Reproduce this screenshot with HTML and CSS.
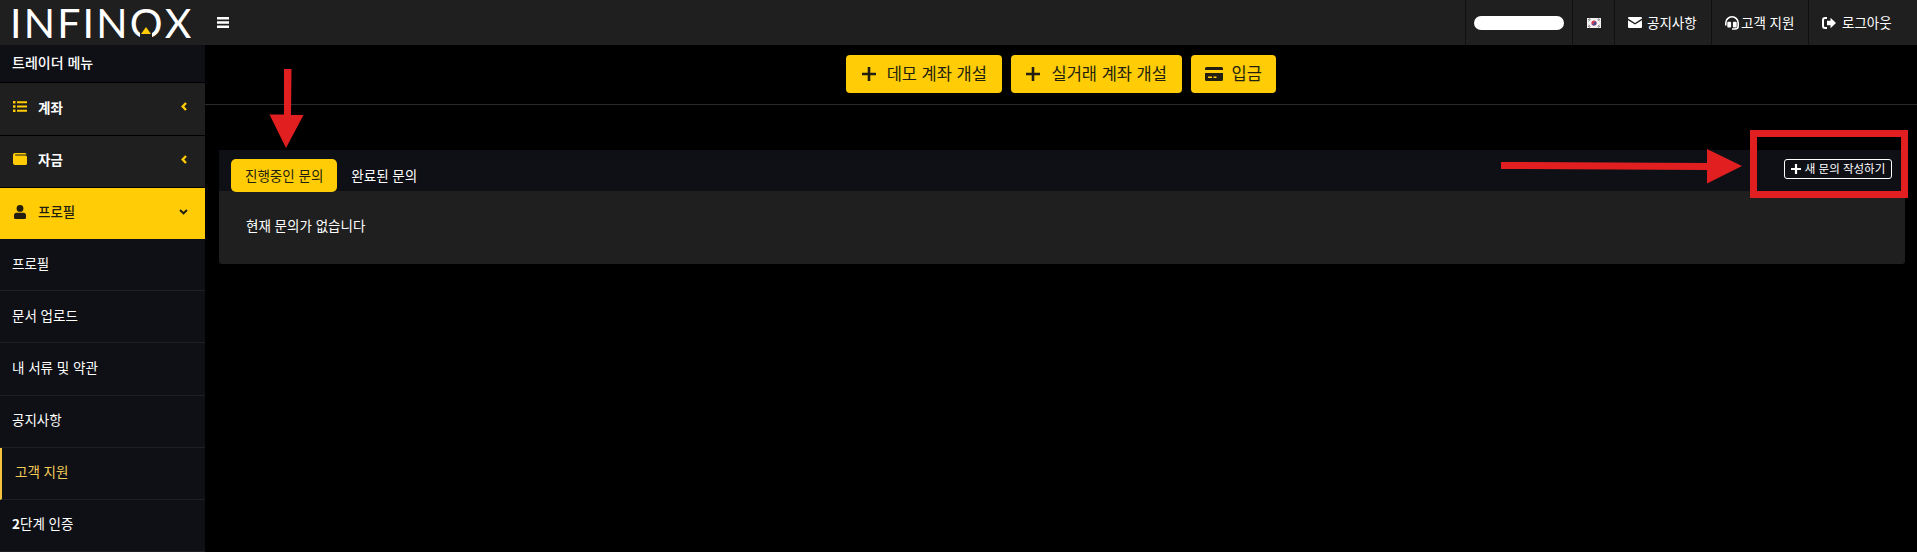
FILE: index.html
```html
<!DOCTYPE html>
<html lang="ko">
<head>
<meta charset="utf-8">
<title>고객 지원</title>
<link rel="stylesheet" href="styles.css">
</head>
<body>
<header class="topbar">
  <div class="logo">INFIN<span class="logo-o">O</span>X</div>
  <button class="burger" aria-label="메뉴"><svg width="12" height="11" viewBox="0 0 12 11"><path d="M0 0h12v2.400H0zM0 4.300h12v2.400H0zM0 8.600h12V11H0z" fill="#fff"/></svg></button>
  <nav class="topnav">
    <div class="topcell cell-user"><span class="pill"></span></div>
    <div class="topcell cell-flag">
      <svg width="14" height="10" viewBox="0 0 14 10"><rect width="14" height="10" fill="#f4f1f2"/><circle cx="7" cy="5" r="2.600" fill="#cf3f52"/><path d="M4.500 5a2.500 2.500 0 0 0 5 0 1.250 1.250 0 0 0-2.500 0 1.250 1.250 0 0 1-2.500 0z" fill="#3c4f96"/><path d="M1 2l2-1.500M1.500 3l2-1.500M10.500 1.500l2 1.500M11 .500l2 1.500M1 8l2 1.500M1.500 7l2 1.500M10.500 8.500l2-1.500M11 9.500l2-1.500" stroke="#555" stroke-width=".7"/></svg>
    </div>
    <a class="topcell cell-notice"><svg width="14" height="11" viewBox="0 0 14 11"><path d="M1 0h12a1 1 0 0 1 1 1v.6L7 6 0 1.600V1a1 1 0 0 1 1-1zM0 3.200 7 7.600l7-4.400V10a1 1 0 0 1-1 1H1a1 1 0 0 1-1-1z" fill="#fff"/></svg>공지사항</a>
    <a class="topcell cell-support"><svg width="14" height="14" viewBox="0 0 14 14"><path d="M7 .8A6.200 6.200 0 0 0 .8 7v2.500M7 .8A6.200 6.200 0 0 1 13.200 7v3c0 2-1.500 3-3.200 3H7" fill="none" stroke="#fff" stroke-width="1.600"/><rect x="2.300" y="5.800" width="3.800" height="5.800" rx="1" fill="#fff"/><rect x="7.900" y="5.800" width="3.800" height="5.800" rx="1" fill="#fff"/></svg>고객 지원</a>
    <a class="topcell cell-logout"><svg width="14" height="12" viewBox="0 0 14 12"><path d="M5 1H3a2 2 0 0 0-2 2v6a2 2 0 0 0 2 2h2" fill="none" stroke="#fff" stroke-width="2"/><path d="M5 3.800h3.500V.8L14 6l-5.500 5.200V8.200H5z" fill="#fff"/></svg>로그아웃</a>
  </nav>
</header>

<div class="layout">
  <aside class="sidebar">
    <div class="side-title">트레이더 메뉴</div>
    <a class="side-main">
      <svg class="side-icon" width="14" height="11" viewBox="0 0 14 11"><path d="M0 0h2.500v2.500H0zM4 .2h10v2.100H4zM0 4.250h2.500v2.500H0zM4 4.450h10v2.100H4zM0 8.500h2.500V11H0zM4 8.700h10v2.100H4z" fill="#ffcc05"/></svg>
      <span class="side-label">계좌</span>
      <svg class="side-chev" width="6" height="9" viewBox="0 0 6 9"><path d="M5 1 1.700 4.500 5 8" fill="none" stroke="#ffcc05" stroke-width="2.400"/></svg>
    </a>
    <a class="side-main">
      <svg class="side-icon" width="14" height="12" viewBox="0 0 14 12"><path d="M2 0h10a1.500 1.500 0 0 1 1.500 1.500H2.500a.5.5 0 0 0 0 1H12.500A1.500 1.500 0 0 1 14 4v6.500a1.500 1.500 0 0 1-1.500 1.500H2a2 2 0 0 1-2-2V2a2 2 0 0 1 2-2z" fill="#ffcc05"/></svg>
      <span class="side-label">자금</span>
      <svg class="side-chev" width="6" height="9" viewBox="0 0 6 9"><path d="M5 1 1.700 4.500 5 8" fill="none" stroke="#ffcc05" stroke-width="2.400"/></svg>
    </a>
    <a class="side-main side-open">
      <svg class="side-icon" width="14" height="14" viewBox="0 0 14 14"><circle cx="7" cy="3.400" r="3.400" fill="#231f10"/><path d="M3.500 7.800h7a2.500 2.500 0 0 1 2.500 2.500V12.700A1.300 1.300 0 0 1 11.700 14H2.300A1.300 1.300 0 0 1 1 12.700V10.300A2.500 2.500 0 0 1 3.500 7.800z" fill="#231f10"/></svg>
      <span class="side-label">프로필</span>
      <svg class="side-chev side-chev-down" width="9" height="6" viewBox="0 0 9 6"><path d="M1 1l3.500 3.300L8 1" fill="none" stroke="#231f10" stroke-width="2"/></svg>
    </a>
    <a class="side-sub">프로필</a>
    <a class="side-sub">문서 업로드</a>
    <a class="side-sub">내 서류 및 약관</a>
    <a class="side-sub">공지사항</a>
    <a class="side-sub side-active">고객 지원</a>
    <a class="side-sub"><b>2</b>단계 인증</a>
  </aside>

  <main class="content">
    <div class="actions">
      <button class="action"><svg width="14" height="14" viewBox="0 0 14 14"><path d="M5.700 0h2.600v5.700H14v2.600H8.300V14H5.700V8.300H0V5.700h5.700z" fill="#231f10"/></svg>데모 계좌 개설</button>
      <button class="action"><svg width="14" height="14" viewBox="0 0 14 14"><path d="M5.700 0h2.600v5.700H14v2.600H8.300V14H5.700V8.300H0V5.700h5.700z" fill="#231f10"/></svg>실거래 계좌 개설</button>
      <button class="action action-deposit"><svg width="18" height="14" viewBox="0 0 18 14"><path d="M1.500 0h15A1.500 1.500 0 0 1 18 1.500V3H0V1.500A1.500 1.500 0 0 1 1.500 0zM0 6h18v6.500a1.500 1.500 0 0 1-1.500 1.500h-15A1.500 1.500 0 0 1 0 12.500zM3 9.500v1.500h4V9.500zM8.500 9.500v1.500h3V9.500z" fill="#231f10" fill-rule="evenodd"/></svg>입금</button>
    </div>
    <section class="panel">
      <div class="panel-head">
        <a class="tab tab-active">진행중인 문의</a>
        <a class="tab">완료된 문의</a>
        <button class="new-btn"><svg width="10" height="10" viewBox="0 0 10 10"><path d="M3.900 0h2.200v3.900H10v2.200H6.100V10H3.900V6.100H0V3.900h3.900z" fill="#fff"/></svg>새 문의 작성하기</button>
      </div>
      <div class="panel-body">현재 문의가 없습니다</div>
    </section>
  </main>
</div>

<svg class="annotations" width="1917" height="552" viewBox="0 0 1917 552" aria-hidden="true">
  <path d="M284 69h7.500l-.5 46h12.500L286 148 269.500 114.500H284z" fill="#e21f20"/>
  <path d="M1501 162l206 1V149l35 17-35 17.500V170l-206-1z" fill="#e21f20"/>
  <rect x="1753.500" y="133.500" width="151" height="61" fill="none" stroke="#e21f20" stroke-width="7"/>
</svg>
</body>
</html>
```
FILE: styles.css
```css
* { box-sizing: border-box; }
html, body { height: 100%; }
body {
  margin: 0;
  background: #000;
  color: #fff;
  font-family: "Noto Sans CJK KR", "Noto Sans", sans-serif;
  font-size: 13.500px;
  line-height: 1.2;
  overflow: hidden;
  position: relative;
}
a { color: inherit; text-decoration: none; }
button { font: inherit; cursor: pointer; border: 0; background: none; color: inherit; padding: 0; }
svg { display: block; flex: none; }

/* Top bar */
.topbar {
  height: 45px;
  background: #1f1f1f;
  display: flex;
  align-items: center;
}
.logo {
  width: 205px;
  padding-left: 10px;
  font-family: Lato, "Open Sans", sans-serif;
  font-size: 41px;
  font-weight: 400;
  letter-spacing: 2.200px;
  line-height: 45px;
  color: #fff;
  white-space: nowrap;
}
.logo-o { position: relative; display: inline-block; }
.logo-o::before {
  content: "";
  position: absolute;
  left: 50%;
  bottom: 7px;
  width: 12px;
  height: 7px;
  margin-left: -7px;
  background: #1f1f1f;
}
.logo-o::after {
  content: "";
  position: absolute;
  left: 50%;
  bottom: 11px;
  margin-left: -6px;
  border-left: 5px solid transparent;
  border-right: 5px solid transparent;
  border-bottom: 7px solid #ffcc05;
}
.burger { margin-left: 12px; }
.topnav { margin-left: auto; display: flex; height: 45px; }
.topcell {
  display: flex;
  align-items: center;
  height: 100%;
  border-left: 1px solid #101010;
  gap: 5px;
  font-size: 13.500px;
  white-space: nowrap;
}
.cell-user { width: 107px; padding-left: 8px; }
.cell-flag { width: 42px; padding-left: 14px; }
.cell-notice { width: 97px; padding-left: 13px; }
.cell-support { width: 97px; padding-left: 13px; gap: 2px; }
.cell-logout { width: 109px; padding-left: 13px; gap: 6px; }
.pill { width: 90px; height: 14px; background: #fff; border-radius: 7px; }

/* Layout */
.layout { display: flex; height: calc(100% - 45px); }

/* Sidebar */
.sidebar { width: 205px; flex: none; background: #0f1016; }
.side-title {
  height: 38px;
  padding: 9px 12px 0;
  font-weight: 500;
  font-size: 14px;
  border-bottom: 1px solid #000;
}
.side-main {
  height: 52.500px;
  display: flex;
  align-items: center;
  padding: 0 18px 4px 13px;
  background: #1f1f1f;
  border-bottom: 1px solid #000;
  font-weight: 700;
}
.side-label { margin-left: 11px; flex: 1; }
.side-open {
  height: 51px;
  background: #ffcc05;
  color: #231f10;
  font-weight: 500;
  border-bottom: 0;
  padding-right: 17px;
}
.side-sub {
  height: 52.200px;
  display: flex;
  align-items: center;
  padding: 0 0 4px 12px;
  border-bottom: 1px solid #1f2026;
}
.side-sub b { font-weight: 700; }
.side-active {
  border-left: 2px solid #f3c340;
  padding-left: 13px;
  color: #f3cd58;
}

/* Content */
.content { flex: 1; min-width: 0; }
.actions {
  height: 60px;
  padding-top: 10px;
  display: flex;
  justify-content: center;
  align-items: flex-start;
  gap: 9px;
  border-bottom: 1px solid #2b2b2b;
}
.action {
  height: 38px;
  padding: 0 15px 0 15.500px;
  display: flex;
  align-items: center;
  gap: 11px;
  background: #ffcc05;
  color: #231f10;
  border-radius: 4px;
  font-size: 16.500px;
}
.action-deposit { gap: 8px; padding: 0 14px 0 14.500px; }
.panel { margin: 45px 12px 0 14px; }
.panel-head {
  height: 41px;
  background: #0f1016;
  display: flex;
  align-items: flex-start;
  padding: 9px 13px 0 12px;
}
.tab {
  height: 33px;
  display: flex;
  align-items: center;
  padding: 0 14px;
}
.tab-active { background: #ffcc05; color: #231f10; border-radius: 5px; }
.new-btn {
  margin-left: auto;
  height: 20px;
  width: 108px;
  border: 1px solid #fff;
  border-radius: 3px;
  display: flex;
  align-items: center;
  justify-content: center;
  gap: 4px;
  font-size: 11.500px;
}
.panel-body {
  height: 73px;
  background: #1f1f1f;
  padding: 26px 27px 0;
  border-radius: 0 0 3px 3px;
}

/* Annotations drawn on the screenshot */
.annotations { position: absolute; left: 0; top: 0; pointer-events: none; }
```
